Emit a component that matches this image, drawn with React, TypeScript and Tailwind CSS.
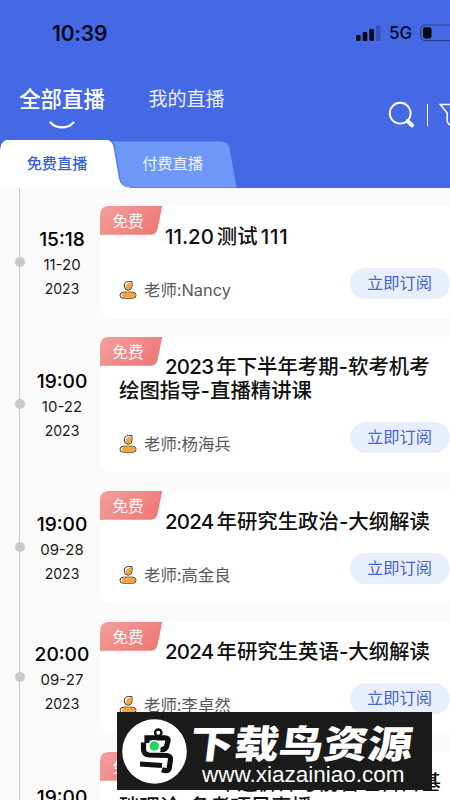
import React from 'react';

interface Live {
  id: number;
  time: string;
  date: string;
  year: string;
  prefix: string;
  title: string;
  suffix?: string;
  teacher: string;
  tall?: boolean;
}

const lives: Live[] = [
  { id: 1, time: '15:18', date: '11-20', year: '2023', prefix: '11.20', title: '测试', suffix: '111', teacher: 'Nancy' },
  { id: 2, time: '19:00', date: '10-22', year: '2023', prefix: '2023', title: '年下半年考期-软考机考绘图指导-直播精讲课', teacher: '杨海兵', tall: true },
  { id: 3, time: '19:00', date: '09-28', year: '2023', prefix: '2024', title: '年研究生政治-大纲解读', teacher: '高金良' },
  { id: 4, time: '20:00', date: '09-27', year: '2023', prefix: '2024', title: '年研究生英语-大纲解读', teacher: '李卓然' },
  { id: 5, time: '19:00', date: '09-26', year: '2023', prefix: '2024', title: '年造价师考前管理科目基础理论-备考项目直播', teacher: '王老师', tall: true },
];

const StatusBar: React.FC = () => (
  <div className="flex h-[66px] items-center justify-between pl-[52px] text-[#070b1c]">
    <span className="text-[21px] font-semibold leading-none tracking-[-0.2px]">10:39</span>
    <div className="flex items-center">
      <svg className="h-4 w-[25px]" viewBox="0 0 25 16" fill="currentColor">
        <rect x="0" y="10" width="4.6" height="6" rx="1.3" />
        <rect x="6.7" y="7" width="4.6" height="9" rx="1.3" />
        <rect x="13.4" y="4" width="4.6" height="12" rx="1.3" />
        <rect x="20.1" y="0.6" width="4.4" height="15.4" rx="1.3" opacity="0.25" />
      </svg>
      <span className="ml-2 w-[23px] text-[17px] font-medium leading-none">5G</span>
      <svg className="ml-2 h-[18px] w-[30px]" viewBox="0 0 30 18">
        <rect x="0.8" y="1" width="33" height="15.6" rx="4.5" fill="none" stroke="#2b3d90" strokeWidth="1.1" />
        <rect x="3" y="3.2" width="8.5" height="11.2" rx="2.4" fill="#03050f" />
      </svg>
    </div>
  </div>
);

const Header: React.FC = () => (
  <header className="h-[188px] bg-[#4568e5]">
    <StatusBar />
    <div className="flex h-[74px] justify-between text-white">
      <div className="flex pl-[19px]">
        <div className="flex w-[86px] flex-col items-center pt-[19px]">
          <span className="whitespace-nowrap text-[21.4px] font-medium leading-7">全部直播</span>
          <svg className="mt-[8px] h-2 w-[26px]" viewBox="0 0 26 8" fill="none" stroke="white" strokeWidth="2.2" strokeLinecap="round">
            <path d="M1.5 1.5C7.5 8 18.5 8 24.5 1.5" />
          </svg>
        </div>
        <span className="ml-[43.5px] pt-5 text-[19px] leading-7 text-white/90">我的直播</span>
      </div>
      <div className="flex items-center pt-[23px]">
        <svg className="h-[27px] w-[27px]" viewBox="0 0 27 27" fill="none" stroke="white" strokeLinecap="round">
          <circle cx="12.2" cy="12.2" r="10.4" strokeWidth="1.9" />
          <path d="M20.3 20.8L24 24.3" strokeWidth="4" />
          <path d="M19 19L22 22" strokeWidth="2" />
        </svg>
        <div className="ml-[11.5px] h-[22px] w-[1.5px] bg-white" />
        <svg className="ml-[11px] h-6 w-[11px]" viewBox="0 0 11 24" fill="none" stroke="white" strokeWidth="1.5">
          <path d="M30 1.5H1.2L8.2 10V18.5L10 21.5H30" />
        </svg>
      </div>
    </div>
    <div className="relative flex h-12 text-base leading-[48px]">
      <svg className="absolute inset-0 h-12 w-[240px]" viewBox="0 0 240 48">
        <path d="M100 1.5H220Q228 1.5 229.5 8L236.5 47.5H100Z" fill="#6f99f9" />
        <path d="M0 48V10Q0 -1 10 -1H103Q113 -1 114.5 7L119.5 39Q121 47.5 129 47.5V48Z" fill="#3657c6" opacity="0.35" transform="translate(1 0)" />
        <path d="M0 48V10Q1 -1 11 -1H102Q112 -1 113.5 7L119 39Q121 47.5 130 47.5V48Z" fill="white" />
      </svg>
      <span className="relative w-[114px] text-center text-[15.2px] font-medium text-[#3b60d8]">免费直播</span>
      <span className="relative w-[117px] text-center text-[15.2px] text-[#eef3ff]">付费直播</span>
    </div>
  </header>
);

const TeacherIcon: React.FC = () => (
  <svg className="h-[19px] w-[18px]" viewBox="0 0 18 19" stroke="#39342e" strokeWidth="1" strokeLinejoin="round">
    <path d="M4.5 11.2Q1 11.2 1 14.3Q1 17.2 4 17.2H14Q17 17.2 17 14.3Q17 11.2 13.5 11.2Z" fill="#fff" />
    <path d="M5 11.7H14Q16.5 11.7 16.5 14.3Q16.5 16.7 14 16.7H4.5Q3 16.7 3 14.8Q3 11.7 5 11.7Z" fill="#f3a638" stroke="none" />
    <path d="M9.2 9V12.5" stroke="#f3a638" strokeWidth="2" />
    <path d="M13 0.6V5Q13 9 9.2 9Q5.2 9 5.2 5Q5.2 0.6 9.5 0.6Z" fill="#fff" />
    <path d="M12.4 1.6V5.2Q12.4 8.5 9.2 8.5Q6.6 8.500 6.600 6Q7 2 12.4 1.6Z" fill="#f3a638" stroke="none" />
  </svg>
);

const LiveCard: React.FC<{ live: Live }> = ({ live }) => (
  <div className={`relative flex flex-1 flex-col rounded-l-[10px] bg-white pl-[19px] ${live.tall ? 'h-[135.5px]' : 'h-[111.7px]'}`}>
    <div className="absolute left-0 top-0 h-[29px] w-[63px]">
      <svg className="absolute inset-0" width="63" height="30" viewBox="0 0 63 30">
        <defs>
          <linearGradient id="ribbon" x1="0" y1="0" x2="1" y2="0.5">
            <stop offset="0" stopColor="#f1a09d" />
            <stop offset="1" stopColor="#ee7a79" />
          </linearGradient>
        </defs>
        <path d="M0 30V9Q0 0 9 0H62.3L57.5 23Q56.3 28.7 51 28.7H3Q0 28.7 0 30Z" fill="url(#ribbon)" />
      </svg>
      <span className="relative ml-[12.5px] text-[15.6px] leading-[31px] text-white">免费</span>
    </div>
    <h3 className="w-[323px] pt-[18.7px] indent-[46px] text-[20.4px] font-medium leading-[24px] text-[#111]">
      <span className={live.prefix === '11.20' ? 'mr-[3px]' : 'mr-[3px] tracking-[-0.7px]'}>{live.prefix}</span>
      {live.title}
      {live.suffix && <span className="ml-[3px] tracking-[0.8px]">{live.suffix}</span>}
    </h3>
    <div className="mt-auto flex justify-between">
      <div className="flex items-end pb-[18px]">
        <TeacherIcon />
        <span className="ml-[7px] text-[16.4px] leading-5 text-[#595959]">老师:{live.teacher}</span>
      </div>
      <button className="mb-[19px] h-[31px] w-[100px] rounded-full bg-[#e9eefc] pr-px text-[16.3px] leading-[31px] text-[#4364d2]">
        立即订阅
      </button>
    </div>
  </div>
);

const Watermark: React.FC = () => (
  <div className="absolute left-[117px] top-[712px] flex h-[78px] w-[315px] items-center bg-[#1b1b1b] pl-[5px] text-white">
    <svg className="h-[65px] w-[65px] shrink-0" viewBox="0 0 65 65" fill="none" stroke="#111" strokeWidth="5.2">
      <circle cx="32.5" cy="32.5" r="32.3" fill="white" stroke="none" />
      <circle cx="36.3" cy="13.7" r="3.2" strokeWidth="2.4" />
      <path d="M25 24V18.8H43Q46.500 18.800 46 22L44.500 27.500Q43.500 31 38.500 30.500" />
      <path d="M21.500 23.500V30Q21.500 35.500 27 36L45 36.500Q49 36.700 48.500 41L47 50Q46 53 40 50.800" />
      <path d="M18 45L40 46.500" />
      <circle cx="32.3" cy="27" r="6" fill="white" stroke="none" />
      <circle cx="32.3" cy="27" r="4.7" fill="#20d65b" stroke="none" />
    </svg>
    <div className="flex flex-col pt-[6px]">
      <span className="ml-px origin-bottom -skew-x-6 scale-y-[0.86] whitespace-nowrap text-[44.5px] font-black leading-[41px]">下载鸟资源</span>
      <span className="ml-[15px] font-['Liberation_Sans'] text-[22.5px] leading-[26px]">www.xiazainiao.com</span>
    </div>
  </div>
);

export default function App() {
  return (
    <div className="relative h-[800px] w-[450px] overflow-hidden bg-[#fafafa] font-[Inter,'Noto_Sans_CJK_SC',sans-serif]">
      <Header />
      <main className="relative flex flex-col gap-[18.9px] pt-[18px]">
        <div className="absolute left-[19px] top-0 h-[700px] w-px bg-[#c8c8c8]" />
        {lives.map((live) => (
          <div key={live.id} className="flex">
            <div className="relative flex w-[100px] shrink-0 items-center">
              <span className="ml-[14.5px] h-[10px] w-[10px] rounded-full bg-[#c8c8c8]" />
              <div className="flex w-[75px] flex-col items-center pt-px text-[#1a1a1a]">
                <span className="text-[19.2px] font-medium leading-7 text-black">{live.time}</span>
                <span className="text-[15px] leading-6">{live.date}</span>
                <span className="text-sm leading-[23px]">{live.year}</span>
              </div>
            </div>
            <LiveCard live={live} />
          </div>
        ))}
      </main>
      <Watermark />
    </div>
  );
}
